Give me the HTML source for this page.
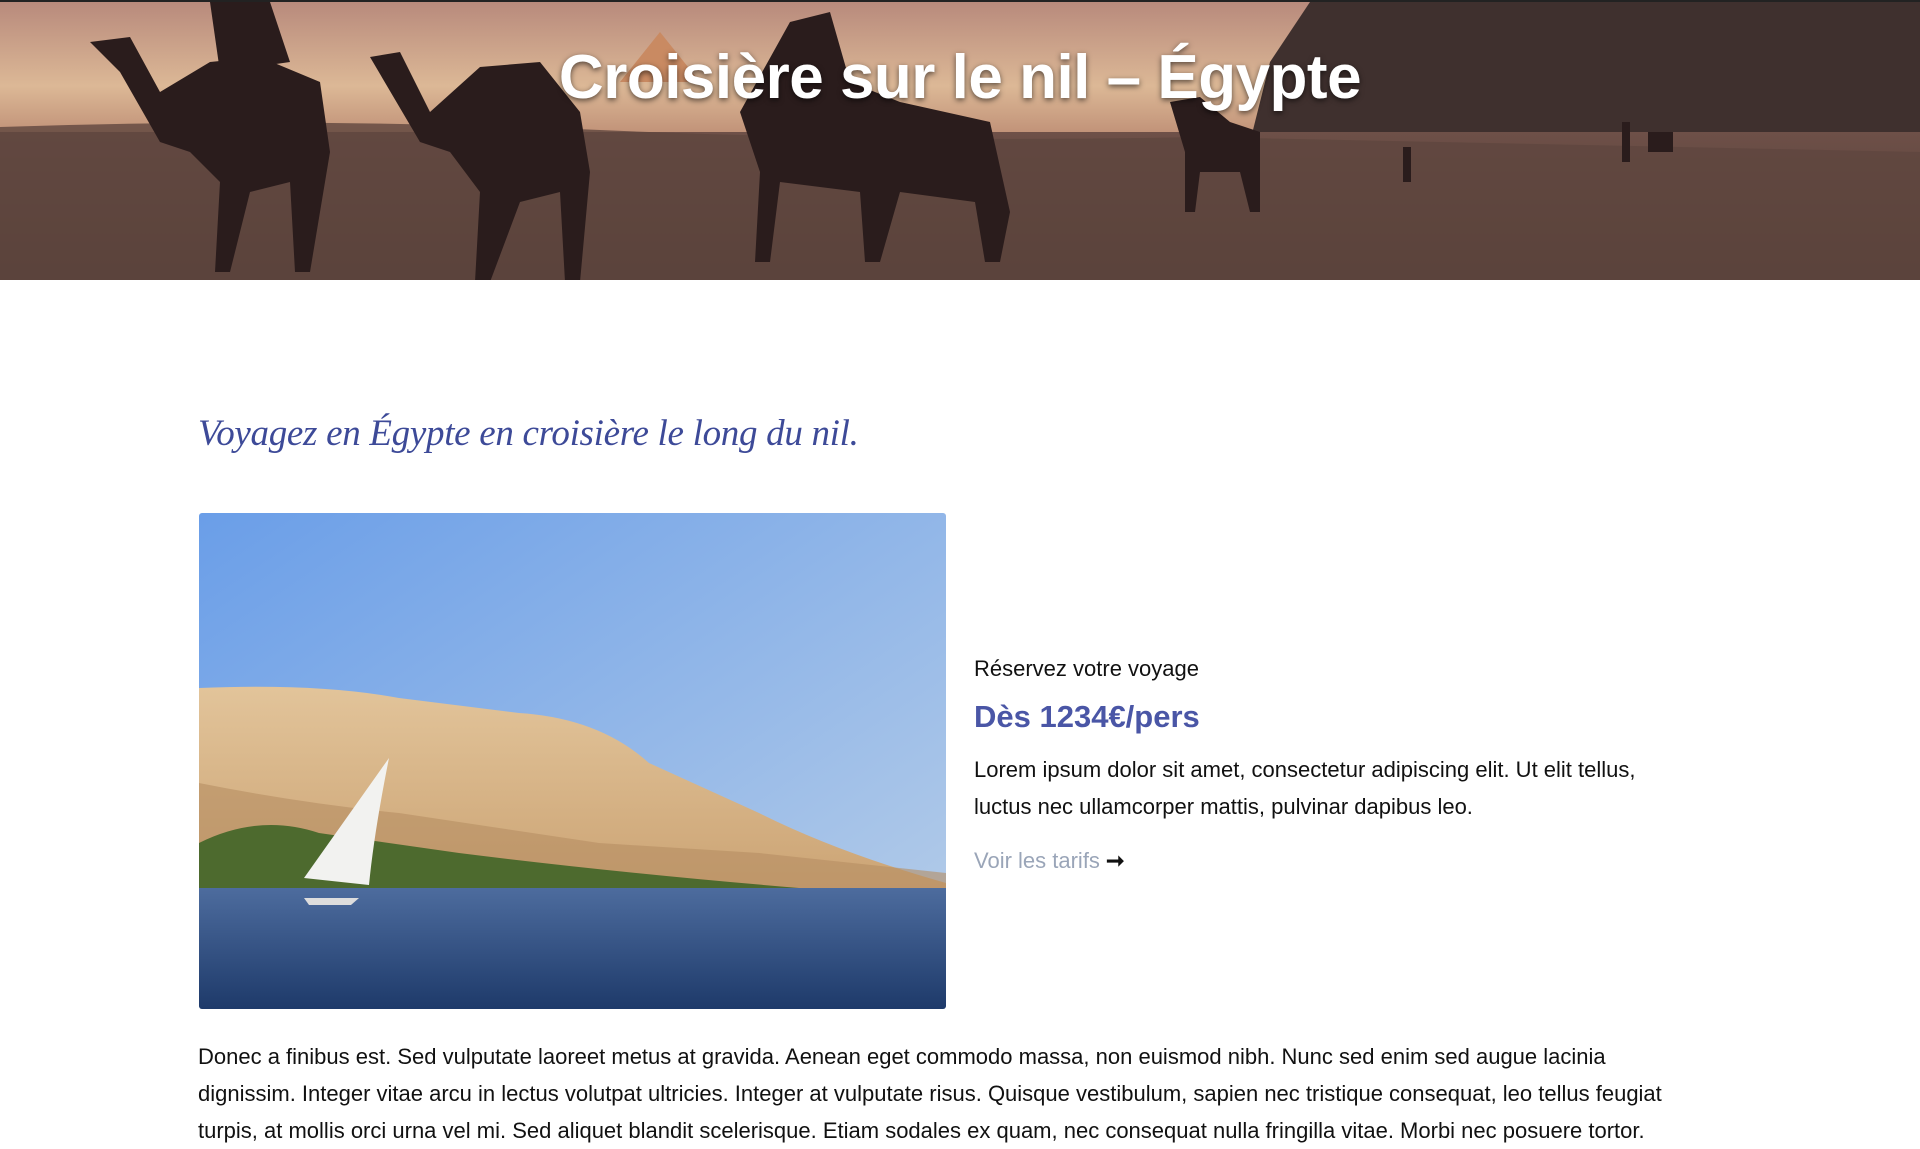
<!DOCTYPE html>
<html><head><meta charset="utf-8"><style>
*{margin:0;padding:0;box-sizing:border-box}
body{width:1920px;height:1132px;overflow:hidden;background:#fff;font-family:"Liberation Sans",Arial,sans-serif;color:#111}
.hero{position:absolute;left:0;top:0;width:1920px;height:280px;overflow:hidden;border-top:2px solid #222;
background:linear-gradient(180deg,#3d2a28 0%,#7a5048 40%,#6b4a40 70%,#4a3530 100%)}
.hero svg{position:absolute;left:0;top:0}
.hero h1{position:absolute;left:0;width:1920px;top:40px;text-align:center;color:#fff;font-size:62px;font-weight:bold;text-shadow:0 2px 6px rgba(0,0,0,.6);letter-spacing:-0.5px}
.script{position:absolute;left:198px;top:412px;font-family:"Liberation Serif",serif;font-style:italic;font-size:37px;color:#3d4a98;letter-spacing:-0.3px}
.photo{position:absolute;left:199px;top:513px;width:747px;height:496px;border-radius:3px;overflow:hidden}
.side{position:absolute;left:974px;top:656px;width:700px}
.side .k{font-size:22px}
.side .p{font-size:31px;font-weight:bold;color:#4a56a6;margin-top:17px}
.side .t{font-size:22px;line-height:37px;margin-top:16px}
.side .v{font-size:22px;color:#9aa5b8;margin-top:23px}
.side .v b{color:#111;font-weight:bold}
.body{position:absolute;left:198px;top:1038px;width:1500px;font-size:22px;line-height:37px}
</style></head><body>
<div class="hero">
<svg width="1920" height="280" viewBox="0 0 1920 280">
<defs><linearGradient id="sky" x1="0" y1="0" x2="0" y2="1"><stop offset="0" stop-color="#b88a7c"/><stop offset=".3" stop-color="#dcb896"/><stop offset=".55" stop-color="#b4806a"/><stop offset="1" stop-color="#5a3d34"/></linearGradient>
<linearGradient id="gr" x1="0" y1="0" x2="0" y2="1"><stop offset="0" stop-color="#6e5048"/><stop offset="1" stop-color="#4a3832"/></linearGradient></defs>
<rect width="1920" height="280" fill="url(#sky)"/>
<polygon points="1310,0 1920,0 1920,150 1250,140 1270,60" fill="#3f302e"/>
<polygon points="660,30 700,80 620,80" fill="#c98a62"/>
<rect x="0" y="130" width="1920" height="150" fill="url(#gr)"/>
<path d="M0 125 Q300 115 600 128 T1200 135 L1920 150 L1920 280 L0 280Z" fill="#5f463e" opacity=".8"/>
<g fill="#2a1c1c">
<path d="M90 40 L130 35 L160 90 L210 60 L260 55 L320 80 L330 150 L310 270 L295 270 L290 180 L250 190 L230 270 L215 270 L220 180 L190 150 L160 140 L120 70Z"/>
<path d="M210 0 L270 0 L290 60 L220 70Z"/>
<path d="M370 55 L400 50 L430 110 L480 65 L540 60 L580 110 L590 170 L580 280 L565 280 L560 190 L520 200 L490 280 L475 280 L480 190 L450 150 L420 140Z"/>
<path d="M790 20 L830 10 L850 80 L900 100 L990 120 L1010 210 L1000 260 L985 260 L975 200 L900 190 L880 260 L865 260 L860 190 L780 180 L770 260 L755 260 L760 170 L740 110Z"/>
<path d="M1170 100 L1200 95 L1230 120 L1260 130 L1260 210 L1250 210 L1240 170 L1200 170 L1195 210 L1185 210 L1185 150Z"/>
<rect x="1403" y="145" width="8" height="35"/><rect x="1622" y="120" width="8" height="40"/><rect x="1648" y="130" width="25" height="20"/>
</g>
</svg>
<h1>Croisière sur le nil – Égypte</h1>
</div>
<div class="script">Voyagez en Égypte en croisière le long du nil.</div>
<div class="photo">
<svg width="747" height="496" viewBox="0 0 747 496">
<defs><linearGradient id="s2" x1="0" y1="0" x2="1" y2="1"><stop offset="0" stop-color="#6a9ee8"/><stop offset="1" stop-color="#b9cfe8"/></linearGradient>
<linearGradient id="w" x1="0" y1="0" x2="0" y2="1"><stop offset="0" stop-color="#4d6c9e"/><stop offset="1" stop-color="#1e3a6a"/></linearGradient>
<linearGradient id="d" x1="0" y1="0" x2="0" y2="1"><stop offset="0" stop-color="#e2c49a"/><stop offset="1" stop-color="#c9a070"/></linearGradient></defs>
<rect width="747" height="496" fill="url(#s2)"/>
<path d="M0 175 Q120 170 200 185 L320 200 Q400 205 450 250 L560 300 Q640 340 747 370 L747 400 L0 400Z" fill="url(#d)"/>
<path d="M0 270 Q100 290 200 300 L400 330 L560 340 L747 360 L747 400 L0 400Z" fill="#b58d62" opacity=".6"/>
<path d="M0 330 Q60 300 120 320 L260 340 Q420 360 600 375 L747 385 L747 400 L0 400Z" fill="#4d6a2e"/>
<rect x="0" y="375" width="747" height="121" fill="url(#w)"/>
<path d="M105 365 L190 245 Q175 320 170 372Z" fill="#f2f2f0"/>
<path d="M105 385 L160 385 L152 392 L110 392Z" fill="#ddd"/>
</svg>
</div>
<div class="side">
<div class="k">Réservez votre voyage</div>
<div class="p">Dès 1234€/pers</div>
<div class="t">Lorem ipsum dolor sit amet, consectetur adipiscing elit. Ut elit tellus, luctus nec ullamcorper mattis, pulvinar dapibus leo.</div>
<div class="v">Voir les tarifs <b>➞</b></div>
</div>
<div class="body">Donec a finibus est. Sed vulputate laoreet metus at gravida. Aenean eget commodo massa, non euismod nibh. Nunc sed enim sed augue lacinia dignissim. Integer vitae arcu in lectus volutpat ultricies. Integer at vulputate risus. Quisque vestibulum, sapien nec tristique consequat, leo tellus feugiat turpis, at mollis orci urna vel mi. Sed aliquet blandit scelerisque. Etiam sodales ex quam, nec consequat nulla fringilla vitae. Morbi nec posuere tortor.</div>
</body></html>
